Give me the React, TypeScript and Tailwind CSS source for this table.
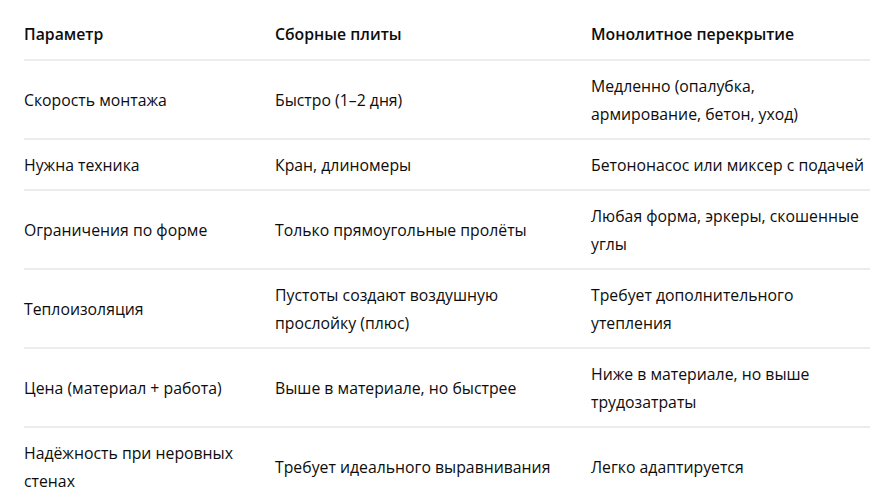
import React from 'react';

const rows: [string, string, string][] = [
  ['Скорость монтажа', 'Быстро (1–2 дня)', 'Медленно (опалубка, армирование, бетон, уход)'],
  ['Нужна техника', 'Кран, длиномеры', 'Бетононасос или миксер с подачей'],
  ['Ограничения по форме', 'Только прямоугольные пролёты', 'Любая форма, эркеры, скошенные углы'],
  ['Теплоизоляция', 'Пустоты создают воздушную прослойку (плюс)', 'Требует дополнительного утепления'],
  ['Цена (материал + работа)', 'Выше в материале, но быстрее', 'Ниже в материале, но выше трудозатраты'],
  ['Надёжность при неровных стенах', 'Требует идеального выравнивания', 'Легко адаптируется'],
];

export default function App() {
  return (
    <div className="min-h-screen bg-white pl-6 pt-[9px] font-['Open_Sans',sans-serif] text-[#0d0d0d]">
      <table className="w-[846px] table-fixed border-collapse text-[15.8px] leading-7">
        <colgroup>
          <col className="w-[251px]" />
          <col className="w-[316px]" />
          <col className="w-[279px]" />
        </colgroup>
        <thead>
          <tr className="border-b-2 border-[#ececec]">
            <th className="py-[11px] pr-4 text-left font-semibold">Параметр</th>
            <th className="py-[11px] pr-4 text-left font-semibold">Сборные плиты</th>
            <th className="py-[11px] pr-1 text-left font-semibold">Монолитное перекрытие</th>
          </tr>
        </thead>
        <tbody>
          {rows.map((r, i) => (
            <tr key={i} className={i < rows.length - 1 ? 'border-b-2 border-[#ececec]' : ''}>
              <td className="py-[10.5px] pr-4 align-middle">{r[0]}</td>
              <td className="py-[10.5px] pr-4 align-middle">{r[1]}</td>
              <td className="py-[10.5px] pr-1 align-middle">{r[2]}</td>
            </tr>
          ))}
        </tbody>
      </table>
    </div>
  );
}
